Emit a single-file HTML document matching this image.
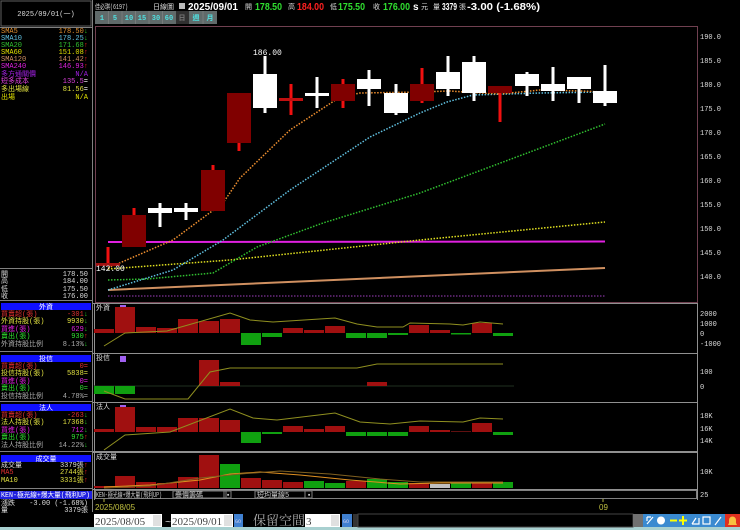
<!DOCTYPE html><html><head><meta charset="utf-8"><style>
body{margin:0;background:#000;width:740px;height:530px;overflow:hidden}
svg{display:block}
text{font-family:"Liberation Mono","Noto Sans CJK TC",monospace;font-size:7px}
.b{font-family:"Liberation Sans","Noto Sans CJK TC",sans-serif;font-weight:bold;font-size:10px}
.r{text-anchor:end}
</style></head><body>
<svg width="740" height="530" viewBox="0 0 740 530">
<rect width="740" height="530" fill="#000"/>
<!-- left panel -->
<line x1="92.5" y1="0" x2="92.5" y2="512" stroke="#808080"/>
<rect x="1" y="1" width="90" height="25" fill="none" stroke="#606060"/>
<text x="46" y="16" fill="#ddd" text-anchor="middle">2025/09/01(一)</text>
<line x1="0" y1="27.5" x2="92" y2="27.5" stroke="#808080"/>
<g>
<text x="1" y="33" fill="#e09030">SMA5</text><text x="88" y="33" class="r" fill="#e09030">178.50<tspan fill="#2c2">↓</tspan></text>
<text x="1" y="40" fill="#60c0e0">SMA10</text><text x="88" y="40" class="r" fill="#60c0e0">178.25<tspan fill="#2c2">↓</tspan></text>
<text x="1" y="47" fill="#30c030">SMA20</text><text x="88" y="47" class="r" fill="#30c030">171.68<tspan fill="#f22">↑</tspan></text>
<text x="1" y="54" fill="#e0e000">SMA60</text><text x="88" y="54" class="r" fill="#e0e000">151.08<tspan fill="#f22">↑</tspan></text>
<text x="1" y="61" fill="#d09060">SMA120</text><text x="88" y="61" class="r" fill="#d09060">141.42<tspan fill="#f22">↑</tspan></text>
<text x="1" y="68" fill="#e020e0">SMA240</text><text x="88" y="68" class="r" fill="#e020e0">146.93<tspan fill="#f22">↑</tspan></text>
<text x="1" y="76" fill="#a020e0">多方通關價</text><text x="88" y="76" class="r" fill="#a020e0">N/A</text>
<text x="1" y="83" fill="#e040e0">短多成本</text><text x="88" y="83" class="r" fill="#e040e0">135.5<tspan fill="#fff">=</tspan></text>
<text x="1" y="91" fill="#e0e040">多出場線</text><text x="88" y="91" class="r" fill="#e0e040">81.56<tspan fill="#fff">=</tspan></text>
<text x="1" y="99" fill="#e0e000">出場</text><text x="88" y="99" class="r" fill="#e0e000">N/A</text>
</g>
<line x1="0" y1="268.5" x2="92" y2="268.5" stroke="#808080"/>
<g fill="#ddd">
<text x="1" y="276">開</text><text x="88" y="276" class="r">178.50</text>
<text x="1" y="283">高</text><text x="88" y="283" class="r">184.00</text>
<text x="1" y="291">低</text><text x="88" y="291" class="r">175.50</text>
<text x="1" y="298">收</text><text x="88" y="298" class="r">176.00</text>
</g>
<line x1="0" y1="300.5" x2="92" y2="300.5" stroke="#808080"/>
<rect x="1" y="303" width="90" height="7" fill="#1010ff"/><text x="46" y="309" fill="#fff" text-anchor="middle">外資</text>
<text x="1" y="316" fill="#e03030">買賣超(張)</text><text x="88" y="316" class="r" fill="#e03030">-301<tspan fill="#2c2">↓</tspan></text>
<text x="1" y="323" fill="#e0e040">外資持股(張)</text><text x="88" y="323" class="r" fill="#e0e040">9930<tspan fill="#2c2">↓</tspan></text>
<text x="1" y="331" fill="#e020e0">買進(張)</text><text x="88" y="331" class="r" fill="#e020e0">629<tspan fill="#2c2">↓</tspan></text>
<text x="1" y="338" fill="#30e030">賣出(張)</text><text x="88" y="338" class="r" fill="#30e030">930<tspan fill="#f22">↑</tspan></text>
<text x="1" y="346" fill="#aaa">外資持股比例</text><text x="88" y="346" class="r" fill="#aaa">8.13%<tspan fill="#2c2">↓</tspan></text>
<line x1="0" y1="351.5" x2="92" y2="351.5" stroke="#808080"/>
<rect x="1" y="355" width="90" height="7" fill="#1010ff"/><text x="46" y="361" fill="#fff" text-anchor="middle">投信</text>
<text x="1" y="368" fill="#e03030">買賣超(張)</text><text x="88" y="368" class="r" fill="#e03030">0=</text>
<text x="1" y="375" fill="#e0e040">投信持股(張)</text><text x="88" y="375" class="r" fill="#e0e040">5838=</text>
<text x="1" y="383" fill="#e020e0">買進(張)</text><text x="88" y="383" class="r" fill="#e020e0">0=</text>
<text x="1" y="390" fill="#30e030">賣出(張)</text><text x="88" y="390" class="r" fill="#30e030">0=</text>
<text x="1" y="398" fill="#aaa">投信持股比例</text><text x="88" y="398" class="r" fill="#aaa">4.78%=</text>
<line x1="0" y1="401.5" x2="92" y2="401.5" stroke="#808080"/>
<rect x="1" y="404" width="90" height="7" fill="#1010ff"/><text x="46" y="410" fill="#fff" text-anchor="middle">法人</text>
<text x="1" y="417" fill="#e03030">買賣超(張)</text><text x="88" y="417" class="r" fill="#e03030">-263<tspan fill="#2c2">↓</tspan></text>
<text x="1" y="424" fill="#e0e040">法人持股(張)</text><text x="88" y="424" class="r" fill="#e0e040">17368<tspan fill="#2c2">↓</tspan></text>
<text x="1" y="432" fill="#e020e0">買進(張)</text><text x="88" y="432" class="r" fill="#e020e0">712<tspan fill="#2c2">↓</tspan></text>
<text x="1" y="439" fill="#30e030">賣出(張)</text><text x="88" y="439" class="r" fill="#30e030">975<tspan fill="#f22">↑</tspan></text>
<text x="1" y="447" fill="#aaa">法人持股比例</text><text x="88" y="447" class="r" fill="#aaa">14.22%<tspan fill="#2c2">↓</tspan></text>
<line x1="0" y1="451.5" x2="92" y2="451.5" stroke="#808080"/>
<rect x="1" y="455" width="90" height="7" fill="#1010ff"/><text x="46" y="461" fill="#fff" text-anchor="middle">成交量</text>
<text x="1" y="467" fill="#ddd">成交量</text><text x="88" y="467" class="r" fill="#ddd">3379張<tspan fill="#f22">↑</tspan></text>
<text x="1" y="474" fill="#e03030">MA5</text><text x="88" y="474" class="r" fill="#e0e040">2744張<tspan fill="#f22">↑</tspan></text>
<text x="1" y="482" fill="#e0e040">MA10</text><text x="88" y="482" class="r" fill="#e0e040">3331張<tspan fill="#f22">↑</tspan></text>
<line x1="0" y1="488.5" x2="92" y2="488.5" stroke="#808080"/>
<rect x="0" y="491" width="92" height="8" fill="#2020e0"/><text x="1" y="497" fill="#fff" font-size="6.5" textLength="89" lengthAdjust="spacingAndGlyphs">KEN-極光線+爆大量(飛利UP)</text>
<text x="1" y="505" fill="#ddd">漲跌</text><text x="88" y="505" class="r" fill="#ddd">-3.00 (-1.68%)</text>
<text x="1" y="512" fill="#ddd">量</text><text x="88" y="512" class="r" fill="#ddd">3379張</text>

<!-- header -->
<text x="95" y="9" fill="#ddd" textLength="33" lengthAdjust="spacingAndGlyphs">佳必琪(6197)</text>
<text x="153" y="9" fill="#ddd">日線圖</text>
<rect x="179" y="3" width="6" height="6" fill="#bbb"/>
<text x="188" y="10" class="b" fill="#fff" font-size="11" textLength="50" lengthAdjust="spacingAndGlyphs">2025/09/01</text>
<text x="245" y="9" fill="#ddd">開</text><text x="255" y="10" class="b" fill="#30e030" textLength="27" lengthAdjust="spacingAndGlyphs">178.50</text>
<text x="288" y="9" fill="#ddd">高</text><text x="297" y="10" class="b" fill="#ff2020" textLength="27" lengthAdjust="spacingAndGlyphs">184.00</text>
<text x="330" y="9" fill="#ddd">低</text><text x="338" y="10" class="b" fill="#30e030" textLength="27" lengthAdjust="spacingAndGlyphs">175.50</text>
<text x="373" y="9" fill="#ddd">收</text><text x="383" y="10" class="b" fill="#30e030" textLength="27" lengthAdjust="spacingAndGlyphs">176.00</text>
<text x="413" y="10" class="b" fill="#fff" font-size="8">s</text><text x="421" y="9" fill="#ddd">元</text>
<text x="433" y="9" fill="#ddd">量</text><text x="442" y="10" class="b" fill="#fff" textLength="15" lengthAdjust="spacingAndGlyphs">3379</text><text x="459" y="9" fill="#ddd">張</text>
<text x="467" y="10" class="b" fill="#fff" textLength="73" lengthAdjust="spacingAndGlyphs">-3.00 (-1.68%)</text>
<g>
<rect x="95" y="11" width="122" height="13" fill="#606a6a"/>
<rect x="176" y="11" width="13" height="13" fill="#303030"/>
<g stroke="#888" stroke-width="0.6"><line x1="108.5" y1="11" x2="108.5" y2="24"/><line x1="122" y1="11" x2="122" y2="24"/><line x1="135.5" y1="11" x2="135.5" y2="24"/><line x1="149" y1="11" x2="149" y2="24"/><line x1="162.5" y1="11" x2="162.5" y2="24"/><line x1="203" y1="11" x2="203" y2="24"/></g>
<g fill="#50e0e0" font-weight="bold" text-anchor="middle" style="font-size:7.5px">
<text x="102" y="20">1</text><text x="115" y="20">5</text><text x="129" y="20">10</text><text x="142" y="20">15</text><text x="156" y="20">30</text><text x="169" y="20">60</text><text x="182" y="20" fill="#777">日</text><text x="196" y="20">週</text><text x="210" y="20">月</text></g>
</g>

<rect x="95.5" y="26.5" width="602" height="276" fill="none" stroke="#704050"/>
<g fill="#ddd" style="font-size:7.5px">
<text x="700" y="39">190.0</text><text x="700" y="63">185.0</text><text x="700" y="87">180.0</text><text x="700" y="111">175.0</text><text x="700" y="135">170.0</text><text x="700" y="159">165.0</text><text x="700" y="183">160.0</text><text x="700" y="207">155.0</text><text x="700" y="231">150.0</text><text x="700" y="255">145.0</text><text x="700" y="279">140.0</text>
</g>
<line x1="108" y1="296" x2="605" y2="296" stroke="#a040c0" stroke-dasharray="1.5 1.5"/>
<polyline points="108,290 605,268" fill="none" stroke="#d09060" stroke-width="2"/>
<line x1="108" y1="242" x2="605" y2="241.5" stroke="#e020e0" stroke-width="2"/>
<polyline points="108,269 230,260 420,240 605,222" fill="none" stroke="#e0e020" stroke-width="1.5" stroke-dasharray="1.5 1.5"/>
<polyline points="108,280 147,279 213,273 257,247 323,223 420,193 605,124" fill="none" stroke="#30c030" stroke-width="1.5" stroke-dasharray="1.5 1.5"/>
<polyline points="108,290 173,270 223,240 290,190 370,137 420,113 447,102 473,95 540,93 605,92" fill="none" stroke="#60c0e0" stroke-width="1.5" stroke-dasharray="1.5 1.5"/>
<polyline points="108,268 173,240 223,203 240,178 290,130 340,97 360,93 420,92 450,91 480,93 500,94 540,90 580,91 605,92" fill="none" stroke="#f09030" stroke-width="1.5" stroke-dasharray="1.5 1.5"/>
<g stroke-width="3">
<line x1="108" y1="247" x2="108" y2="266" stroke="#f01010"/><rect x="96" y="263" width="24" height="3" fill="#a01010"/>
<line x1="134" y1="208" x2="134" y2="247" stroke="#f01010"/><rect x="122" y="215" width="24" height="32" fill="#800000"/>
<line x1="160" y1="203" x2="160" y2="227" stroke="#fff"/><rect x="148" y="208" width="24" height="5" fill="#fff"/>
<line x1="186" y1="203" x2="186" y2="220" stroke="#fff"/><rect x="174" y="208" width="24" height="4" fill="#fff"/>
<line x1="213" y1="165" x2="213" y2="211" stroke="#f01010"/><rect x="201" y="170" width="24" height="41" fill="#800000"/>
<line x1="239" y1="93" x2="239" y2="151" stroke="#f01010"/><rect x="227" y="93" width="24" height="50" fill="#800000"/>
<line x1="265" y1="56" x2="265" y2="113" stroke="#fff"/><rect x="253" y="74" width="24" height="34" fill="#fff"/>
<line x1="291" y1="84" x2="291" y2="115" stroke="#f01010"/><rect x="279" y="98" width="24" height="3" fill="#c01010"/>
<line x1="317" y1="77" x2="317" y2="108" stroke="#fff"/><rect x="305" y="93" width="24" height="3" fill="#fff"/>
<line x1="343" y1="79" x2="343" y2="108" stroke="#f01010"/><rect x="331" y="84" width="24" height="17" fill="#800000"/>
<line x1="369" y1="70" x2="369" y2="106" stroke="#fff"/><rect x="357" y="79" width="24" height="10" fill="#fff"/>
<line x1="396" y1="84" x2="396" y2="115" stroke="#fff"/><rect x="384" y="93" width="24" height="20" fill="#fff"/>
<line x1="422" y1="68" x2="422" y2="103" stroke="#f01010"/><rect x="410" y="84" width="24" height="17" fill="#800000"/>
<line x1="448" y1="56" x2="448" y2="96" stroke="#fff"/><rect x="436" y="72" width="24" height="17" fill="#fff"/>
<line x1="474" y1="56" x2="474" y2="101" stroke="#fff"/><rect x="462" y="62" width="24" height="31" fill="#fff"/>
<line x1="500" y1="86" x2="500" y2="122" stroke="#f01010"/><rect x="488" y="86" width="24" height="7" fill="#800000"/>
<line x1="527" y1="72" x2="527" y2="96" stroke="#fff"/><rect x="515" y="74" width="24" height="12" fill="#fff"/>
<line x1="553" y1="67" x2="553" y2="101" stroke="#fff"/><rect x="541" y="84" width="24" height="7" fill="#fff"/>
<line x1="579" y1="77" x2="579" y2="103" stroke="#fff"/><rect x="567" y="77" width="24" height="12" fill="#fff"/>
<line x1="605" y1="65" x2="605" y2="106" stroke="#fff"/><rect x="593" y="91" width="24" height="12" fill="#fff"/>
</g>
<text x="253" y="55" fill="#fff" style="font-size:8px">186.00</text>
<text x="96" y="271" fill="#fff" style="font-size:8px">142.00</text>

<g stroke="#909090"><line x1="93" y1="303.5" x2="697" y2="303.5"/><line x1="93" y1="353.5" x2="697" y2="353.5"/><line x1="93" y1="402.5" x2="697" y2="402.5"/><line x1="93" y1="452" x2="697" y2="452" stroke-width="2"/><line x1="93" y1="489.5" x2="697" y2="489.5"/></g>
<line x1="697.5" y1="303" x2="697.5" y2="500" stroke="#909090"/>
<line x1="94.5" y1="303" x2="94.5" y2="500" stroke="#909090"/>
<g fill="#ddd"><text x="96" y="310">外資</text><text x="96" y="360">投信</text><text x="96" y="409">法人</text><text x="96" y="459">成交量</text></g>
<rect x="120" y="305" width="6" height="6" fill="#a060f0"/><rect x="120" y="356" width="6" height="6" fill="#a060f0"/><rect x="120" y="405" width="6" height="6" fill="#a060f0"/>
<g fill="#ddd"><text x="700" y="316">2000</text><text x="700" y="326">1000</text><text x="700" y="336">0</text><text x="700" y="346">-1000</text>
<text x="700" y="374">100</text><text x="700" y="389">0</text>
<text x="700" y="418">18K</text><text x="700" y="431">16K</text><text x="700" y="443">14K</text>
<text x="700" y="474">10K</text><text x="700" y="497">25</text></g>
<g>
<rect x="94" y="329" width="20" height="4" fill="#a01010"/><rect x="115" y="307" width="20" height="26" fill="#a01010"/><rect x="136" y="327" width="20" height="6" fill="#a01010"/><rect x="157" y="328" width="20" height="5" fill="#a01010"/><rect x="178" y="319" width="20" height="14" fill="#a01010"/><rect x="199" y="321" width="20" height="12" fill="#a01010"/><rect x="220" y="319" width="20" height="14" fill="#a01010"/>
<rect x="241" y="333" width="20" height="12" fill="#10a010"/><rect x="262" y="333" width="20" height="4" fill="#10a010"/>
<rect x="283" y="328" width="20" height="5" fill="#a01010"/><rect x="304" y="330" width="20" height="3" fill="#a01010"/><rect x="325" y="326" width="20" height="7" fill="#a01010"/>
<rect x="346" y="333" width="20" height="5" fill="#10a010"/><rect x="367" y="333" width="20" height="5" fill="#10a010"/><rect x="388" y="333" width="20" height="2" fill="#10a010"/>
<rect x="409" y="325" width="20" height="8" fill="#a01010"/><rect x="430" y="330" width="20" height="3" fill="#a01010"/><rect x="451" y="333" width="20" height="1.5" fill="#10a010"/><rect x="472" y="323" width="20" height="10" fill="#a01010"/><rect x="493" y="333" width="20" height="3" fill="#10a010"/>
<polyline points="104,346 125,333 167,331 230,313 250,320 273,322 335,318 357,324 377,327 403,327 410,323 450,324 463,325 480,322 503,324" fill="none" stroke="#909020"/>
</g>
<g>
<line x1="94" y1="386" x2="514" y2="386" stroke="#203020"/>
<rect x="94" y="386" width="20" height="8" fill="#10a010"/><rect x="115" y="386" width="20" height="8" fill="#10a010"/><rect x="199" y="360" width="20" height="26" fill="#a01010"/><rect x="220" y="382" width="20" height="4" fill="#a01010"/><rect x="367" y="382" width="20" height="4" fill="#a01010"/>
<polyline points="104,391 125,399 188,399 210,372 230,368 357,368 377,364 503,364" fill="none" stroke="#909020"/>
</g>
<g>
<rect x="94" y="429" width="20" height="3" fill="#a01010"/><rect x="115" y="407" width="20" height="25" fill="#a01010"/><rect x="136" y="427" width="20" height="5" fill="#a01010"/><rect x="157" y="427" width="20" height="5" fill="#a01010"/><rect x="178" y="418" width="20" height="14" fill="#a01010"/><rect x="199" y="418" width="20" height="14" fill="#a01010"/><rect x="220" y="420" width="20" height="12" fill="#a01010"/>
<rect x="241" y="432" width="20" height="11" fill="#10a010"/><rect x="262" y="432" width="20" height="2" fill="#10a010"/>
<rect x="283" y="426" width="20" height="6" fill="#a01010"/><rect x="304" y="429" width="20" height="3" fill="#a01010"/><rect x="325" y="426" width="20" height="6" fill="#a01010"/>
<rect x="346" y="432" width="20" height="4" fill="#10a010"/><rect x="367" y="432" width="20" height="4" fill="#10a010"/><rect x="388" y="432" width="20" height="4" fill="#10a010"/>
<rect x="409" y="426" width="20" height="6" fill="#a01010"/><rect x="430" y="430" width="20" height="2" fill="#a01010"/><rect x="451" y="431" width="20" height="1" fill="#601010"/><rect x="472" y="423" width="20" height="9" fill="#a01010"/><rect x="493" y="432" width="20" height="3" fill="#10a010"/>
<polyline points="104,450 125,435 170,432 230,409 253,418 277,420 335,413 360,422 390,424 420,421 463,422 480,418 503,419" fill="none" stroke="#909020"/>
</g>
<g>
<rect x="94" y="486" width="20" height="2" fill="#a01010"/><rect x="115" y="476" width="20" height="12" fill="#a01010"/><rect x="136" y="482" width="20" height="6" fill="#a01010"/><rect x="157" y="483" width="20" height="5" fill="#a01010"/><rect x="178" y="477" width="20" height="11" fill="#a01010"/><rect x="199" y="455" width="20" height="33" fill="#a01010"/><rect x="220" y="464" width="20" height="24" fill="#10a010"/>
<rect x="241" y="478" width="20" height="10" fill="#a01010"/><rect x="262" y="480" width="20" height="8" fill="#a01010"/><rect x="283" y="482" width="20" height="6" fill="#a01010"/><rect x="304" y="481" width="20" height="7" fill="#10a010"/><rect x="325" y="483" width="20" height="5" fill="#10a010"/><rect x="346" y="481" width="20" height="7" fill="#a01010"/><rect x="367" y="479" width="20" height="9" fill="#10a010"/><rect x="388" y="482" width="20" height="6" fill="#10a010"/><rect x="409" y="483" width="20" height="5" fill="#a01010"/><rect x="430" y="484" width="20" height="4" fill="#c0c0c0"/><rect x="451" y="482" width="20" height="6" fill="#10a010"/><rect x="472" y="483" width="20" height="5" fill="#a01010"/><rect x="493" y="482" width="20" height="6" fill="#10a010"/>
<polyline points="104,487 150,485 200,480 230,474 260,472 300,475 350,480 400,484 440,483 503,483" fill="none" stroke="#e09020"/>
<polyline points="104,488 150,486 200,478 240,474 280,471 330,474 380,479 420,482 503,482" fill="none" stroke="#806020"/>
</g>
<rect x="95.5" y="490.5" width="601" height="8" fill="none" stroke="#808080"/>
<text x="96" y="497" fill="#ccc" font-size="6.5" textLength="66" lengthAdjust="spacingAndGlyphs">KEN-極光線+爆大量(飛利UP)</text>
<rect x="173" y="491" width="53" height="7" fill="none" stroke="#808080"/><text x="175" y="497" fill="#ccc" font-size="6">疊價籌碼</text>
<rect x="224" y="491" width="7" height="7" fill="none" stroke="#808080"/><text x="226" y="497" fill="#ccc" font-size="6">▪</text>
<rect x="255" y="491" width="50" height="7" fill="none" stroke="#808080"/><text x="257" y="497" fill="#ccc" font-size="6">短均量線5</text>
<rect x="305" y="491" width="7" height="7" fill="none" stroke="#808080"/><text x="307" y="497" fill="#ccc" font-size="6">▪</text>
<line x1="104" y1="499" x2="104" y2="502" stroke="#b0b040"/><line x1="603" y1="499" x2="603" y2="502" stroke="#b0b040"/>
<text x="95" y="510" fill="#c0c040" style="font-size:8px;font-family:'Liberation Sans'">2025/08/05</text>
<text x="599" y="510" fill="#c0c040" style="font-size:8px;font-family:'Liberation Sans'">09</text>
<rect x="0" y="527" width="740" height="3" fill="#a8d0d0"/>
<rect x="94" y="514" width="68" height="13" fill="#fff"/><text x="95" y="525" fill="#444" style="font-size:11px;font-family:'Liberation Serif'">2025/08/05</text><rect x="153" y="515" width="8" height="11" fill="#e0e0e0"/>
<text x="165" y="525" fill="#ddd" style="font-size:10px">~</text>
<rect x="171" y="514" width="62" height="13" fill="#fff"/><text x="172" y="525" fill="#444" style="font-size:11px;font-family:'Liberation Serif'">2025/09/01</text><rect x="224" y="515" width="8" height="11" fill="#e0e0e0"/>
<rect x="234" y="514" width="9" height="13" fill="#4080d0"/><text x="235" y="523" fill="#cce" style="font-size:5px">GO</text>
<text x="253" y="525" fill="#aaa" style="font-size:13px;font-family:'Noto Serif CJK SC',serif">保留空間</text>
<rect x="305" y="514" width="35" height="13" fill="#fff"/><text x="306" y="525" fill="#444" style="font-size:11px;font-family:'Liberation Serif'">3</text><rect x="331" y="515" width="8" height="11" fill="#e0e0e0"/>
<rect x="342" y="514" width="10" height="13" fill="#4080d0"/><text x="343" y="523" fill="#cce" style="font-size:5px">GO</text>
<rect x="353" y="514" width="5" height="13" fill="#333"/>
<rect x="358" y="514" width="275" height="13" fill="#000" stroke="#444"/>
<rect x="633" y="514" width="10" height="13" fill="#707070"/>
<rect x="643" y="514" width="92" height="13" fill="#3a8ad0"/>
<g fill="none" stroke="#fff" stroke-width="1.2">
<path d="M647 524 L653 517 M647 517 h4 M647 517 v4"/>
<circle cx="661" cy="520.5" r="4" fill="#fff" stroke="none"/>
<line x1="670" y1="520.5" x2="677" y2="520.5" stroke="#ff0" stroke-width="2"/>
<path d="M683 516 v9 M679 520.5 h8" stroke="#ff0" stroke-width="2"/>
<path d="M692 524 h7 v-6 M692 524 l4 -6"/>
<rect x="703" y="517" width="7" height="7"/>
<path d="M715 525 l6 -8"/>
</g>
<rect x="725" y="514" width="15" height="13" fill="#e03020"/><path d="M728 525 h9 l-1 -2 v-3 a3.5 3.5 0 0 0 -7 0 v3 z" fill="#f8c040"/>
</svg>
</body></html>
